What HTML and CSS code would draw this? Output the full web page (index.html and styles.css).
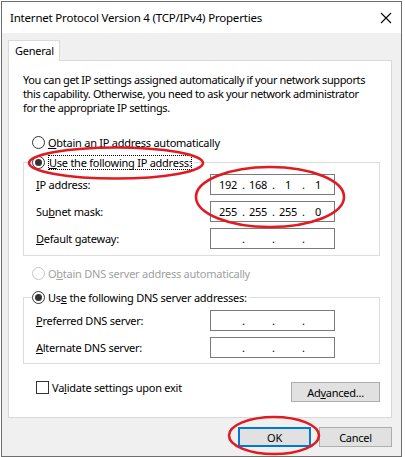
FILE: index.html
```html
<!DOCTYPE html>
<html lang="en">

<head>
  <meta charset="UTF-8">
  <meta name="viewport" content="width=device-width, initial-scale=1.0">
  <title>Internet Protocol Version 4 (TCP/IPv4) Properties</title>
  <link rel="stylesheet" href="styles.css">
</head>

<body>

  <div class="window">
    <div class="titlebar">
      <span class="title">Internet Protocol Version 4 (TCP/IPv4) Properties</span>
      <svg class="close" width="12" height="12" viewBox="0 0 12 12">
        <path d="M1 1 L11 11 M11 1 L1 11" stroke="#000" stroke-width="1.1" fill="none" />
      </svg>
    </div>

    <div class="body">
      <div class="tab">General</div>

      <div class="panel">
        <p class="intro">You can get IP settings assigned automatically if your network supports<br>
          this capability. Otherwise, you need to ask your network administrator<br>
          for the appropriate IP settings.</p>

        <div class="radio first"><span class="dot"></span><span><u>O</u>btain an IP address automatically</span></div>

        <fieldset class="group ip">
          <legend class="radio on"><span class="dot"></span><span class="focus"><u>U</u>se the following IP address:</span></legend>
          <div class="row"><span class="label"><u>I</u>P address:</span><span class="ipbox"><b>192</b><i>.</i><b>168</b><i>.</i><b>1</b><i>.</i><b>1</b></span></div>
          <div class="row"><span class="label">Su<u>b</u>net mask:</span><span class="ipbox"><b>255</b><i>.</i><b>255</b><i>.</i><b>255</b><i>.</i><b>0</b></span></div>
          <div class="row"><span class="label"><u>D</u>efault gateway:</span><span class="ipbox"><b></b><i>.</i><b></b><i>.</i><b></b><i>.</i><b></b></span></div>
        </fieldset>

        <div class="radio disabled dns-auto"><span class="dot"></span><span>O<u>b</u>tain DNS server address automatically</span></div>

        <fieldset class="group dns">
          <legend class="radio on"><span class="dot"></span><span>Us<u>e</u> the following DNS server addresses:</span></legend>
          <div class="row"><span class="label"><u>P</u>referred DNS server:</span><span class="ipbox"><b></b><i>.</i><b></b><i>.</i><b></b><i>.</i><b></b></span></div>
          <div class="row"><span class="label"><u>A</u>lternate DNS server:</span><span class="ipbox"><b></b><i>.</i><b></b><i>.</i><b></b><i>.</i><b></b></span></div>
        </fieldset>

        <div class="bottom-row">
          <label class="check"><span class="box"></span><span>Va<u>l</u>idate settings upon exit</span></label>
          <button class="btn advanced">Ad<u>v</u>anced...</button>
        </div>
      </div>

      <div class="actions">
        <button class="btn default">OK</button>
        <button class="btn">Cancel</button>
      </div>
    </div>
  </div>

  <!-- red annotation marks drawn over the dialog -->
  <svg class="marks" width="405" height="457" viewBox="0 0 405 457">
    <ellipse cx="116" cy="163" rx="87" ry="15.5" />
    <ellipse cx="270" cy="197" rx="74" ry="30" />
    <ellipse cx="274" cy="435.5" rx="45" ry="18.5" />
  </svg>

</body>

</html>
```

FILE: styles.css
```css
body {
  margin: 0;
  padding: 1px 0 0 1px;
  background-color: #fff;
  font-family: 'Noto Sans', sans-serif;
  font-size: 11px;
  letter-spacing: -0.25px;
  color: #000;
  position: relative;
  width: 405px;
  height: 457px;
  box-sizing: border-box;
  overflow: hidden;
}

.window {
  width: 401px;
  height: 456px;
  border: 1px solid #6e6e6e;
  box-sizing: border-box;
  background-color: #f0f0f0;
  display: flex;
  flex-direction: column;
}

.titlebar {
  height: 31px;
  background-color: #fff;
  display: flex;
  align-items: center;
  justify-content: space-between;
  padding: 0 9px 0 8px;
}

.title {
  font-size: 11.5px;
  letter-spacing: -0.2px;
}

.body {
  flex: 1;
  padding: 7px 9px 0 6px;
}

.tab {
  width: 52px;
  height: 21px;
  box-sizing: border-box;
  border: 1px solid #d9d9d9;
  border-bottom: none;
  background-color: #fff;
  padding: 2px 0 0 6px;
  position: relative;
  z-index: 1;
  margin-bottom: -1px;
}

.panel {
  height: 358px;
  box-sizing: border-box;
  border: 1px solid #d9d9d9;
  background-color: #fff;
  padding: 12px 11px 0 14px;
}

.intro {
  margin: 0;
  line-height: 14px;
  letter-spacing: -0.38px;
  white-space: nowrap;
}

.radio {
  display: flex;
  align-items: center;
  height: 15px;
  line-height: 15px;
}

.radio .dot {
  width: 11px;
  height: 11px;
  border: 1px solid #333;
  border-radius: 50%;
  margin-right: 3px;
  display: flex;
  align-items: center;
  justify-content: center;
  background-color: #fff;
  flex: none;
}

.radio.on .dot::after {
  content: '';
  width: 7px;
  height: 7px;
  border-radius: 50%;
  background-color: #333;
}

.radio.disabled {
  color: #a0a0a0;
}

.radio.disabled .dot {
  border-color: #c6c6c6;
}

.first {
  margin: 20px 0 0 9px;
}

.focus {
  outline: 1px dotted #000;
  outline-offset: -1px;
  padding: 0 1px;
}

.group {
  margin: 5px 0 0;
  border: 1px solid #dcdcdc;
  padding: 4px 0 6px 8px;
  display: flex;
  flex-direction: column;
  gap: 6px;
}

.group legend {
  padding: 0 2px 0 0;
}

.dns {
  margin-top: 9px;
  padding-top: 5px;
  padding-bottom: 5px;
}

.dns-auto {
  margin: 10px 0 0 9px;
}

.row {
  display: flex;
  align-items: center;
  height: 21px;
  padding-left: 4px;
}

.label {
  width: 174px;
}

.ipbox {
  width: 125px;
  height: 21px;
  box-sizing: border-box;
  border: 1px solid #7a7a7a;
  display: flex;
  align-items: center;
  padding-left: 3px;
}

.ipbox b {
  font-weight: normal;
  width: 28px;
  text-align: center;
}

.ipbox i {
  font-style: normal;
  width: 2px;
  text-align: center;
}

.bottom-row {
  display: flex;
  justify-content: space-between;
  align-items: flex-start;
  margin-top: 18px;
}

.check {
  display: flex;
  align-items: center;
  margin: -1px 0 0 13px;
  height: 13px;
}

.check .box {
  width: 11px;
  height: 11px;
  border: 1px solid #333;
  margin-right: 3px;
}

.btn {
  font-family: 'Noto Sans', sans-serif;
  font-size: 11px;
  letter-spacing: -0.25px;
  color: #000;
  background-color: #e1e1e1;
  border: 1px solid #adadad;
  height: 20px;
  padding: 0;
  margin: 0;
}

.advanced {
  width: 89px;
}

.actions {
  display: flex;
  justify-content: flex-end;
  gap: 8px;
  margin-top: 9px;
}

.actions .btn {
  width: 73px;
}

.default {
  border: 2px solid #0078d7;
}

.marks {
  position: absolute;
  left: 0;
  top: 0;
  pointer-events: none;
}

.marks ellipse {
  fill: none;
  stroke: #e01b22;
  stroke-width: 2.6;
}
```
